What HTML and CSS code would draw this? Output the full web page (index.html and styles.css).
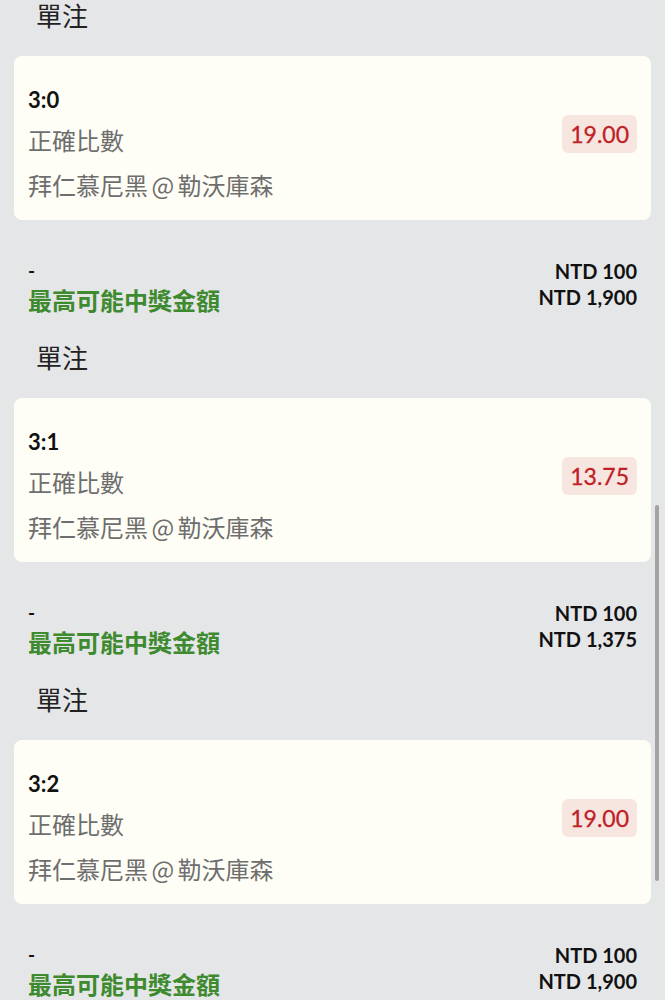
FILE: index.html
```html
<!DOCTYPE html>
<html lang="zh-Hant">
<head>
<meta charset="utf-8">
<link rel="stylesheet" href="styles.css">
</head>
<body>
<div class="list">
  <section class="group">
    <div class="head">單注</div>
    <div class="card">
      <div class="info">
        <div class="score">3:0</div>
        <div class="market">正確比數</div>
        <div class="match">拜仁慕尼黑 @ 勒沃庫森</div>
      </div>
      <div class="odds">19.00</div>
    </div>
    <div class="summary">
      <div class="dash">-</div>
      <div class="amt">NTD 100</div>
      <div class="win">最高可能中獎金額</div>
      <div class="amt">NTD 1,900</div>
    </div>
  </section>
  <section class="group">
    <div class="head">單注</div>
    <div class="card">
      <div class="info">
        <div class="score">3:1</div>
        <div class="market">正確比數</div>
        <div class="match">拜仁慕尼黑 @ 勒沃庫森</div>
      </div>
      <div class="odds">13.75</div>
    </div>
    <div class="summary">
      <div class="dash">-</div>
      <div class="amt">NTD 100</div>
      <div class="win">最高可能中獎金額</div>
      <div class="amt">NTD 1,375</div>
    </div>
  </section>
  <section class="group">
    <div class="head">單注</div>
    <div class="card">
      <div class="info">
        <div class="score">3:2</div>
        <div class="market">正確比數</div>
        <div class="match">拜仁慕尼黑 @ 勒沃庫森</div>
      </div>
      <div class="odds">19.00</div>
    </div>
    <div class="summary">
      <div class="dash">-</div>
      <div class="amt">NTD 100</div>
      <div class="win">最高可能中獎金額</div>
      <div class="amt">NTD 1,900</div>
    </div>
  </section>
</div>
<div class="scrollbar"></div>
</body>
</html>
```
FILE: styles.css
```css
html, body {
  margin: 0;
  padding: 0;
  background: #e5e6e8;
}
body {
  font-family: Lato, "Noto Sans CJK TC", sans-serif;
  width: 665px;
  height: 1000px;
  overflow: hidden;
  position: relative;
}
.list {
  padding: 0 14px;
}
.head {
  font-family: "Noto Sans CJK TC", sans-serif;
  font-size: 26px;
  line-height: 30px;
  height: 30px;
  color: #222;
  padding-left: 22px;
  margin-bottom: 26px;
}
.card {
  background: #fffef6;
  border-radius: 8px;
  height: 164px;
  box-sizing: border-box;
  padding: 28px 14px 0 14px;
  display: flex;
  align-items: flex-start;
  justify-content: space-between;
}
.info {
  display: flex;
  flex-direction: column;
}
.score {
  font-family: Lato, sans-serif;
  font-weight: 700;
  font-size: 22px;
  line-height: 32px;
  color: #111;
}
.market, .match {
  font-family: "Noto Sans CJK TC", sans-serif;
  font-size: 24px;
  line-height: 44px;
  color: #6e6e6e;
}
.market {
  margin-top: 2px;
}
.match {
  margin-top: 1px;
  word-spacing: -2px;
}
.odds {
  margin-top: 31px;
  height: 38px;
  line-height: 38px;
  padding: 0 8px;
  border-radius: 6px;
  background: #f7e6e0;
  color: #bf2027;
  font-family: Lato, sans-serif;
  font-size: 23px;
  -webkit-text-stroke: 0.3px #bf2027;
}
.summary {
  display: grid;
  grid-template-columns: 1fr auto;
  grid-template-rows: 22px 30px;
  align-items: center;
  padding: 40px 14px 30px 14px;
}
.dash {
  font-family: Lato, sans-serif;
  font-weight: 700;
  font-size: 19px;
  color: #111;
  line-height: 22px;
}
.amt {
  font-family: Lato, sans-serif;
  font-weight: 700;
  font-size: 20px;
  color: #111;
  text-align: right;
  line-height: 22px;
}
.win {
  font-family: "Noto Sans CJK TC", sans-serif;
  font-weight: 700;
  font-size: 24px;
  line-height: 30px;
  color: #3e8a2f;
  margin-top: 6px;
}
.scrollbar {
  position: absolute;
  left: 655px;
  top: 505px;
  width: 4px;
  height: 376px;
  border-radius: 2px;
  background: #a3a3a5;
}
```
